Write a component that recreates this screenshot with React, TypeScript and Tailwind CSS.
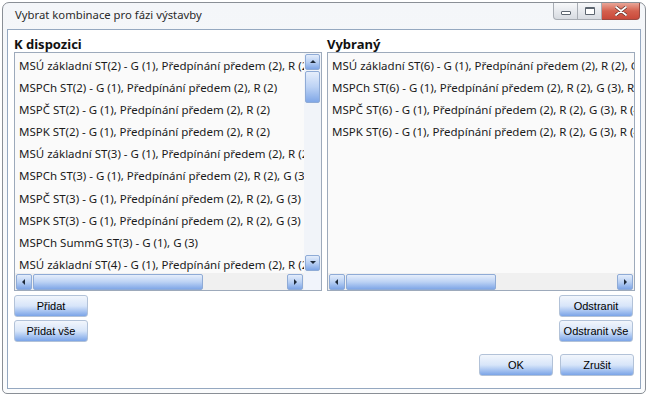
import React from 'react'

const available = [
  'MSÚ základní ST(2) - G (1), Předpínání předem (2), R (2), G (3)',
  'MSPCh ST(2) - G (1), Předpínání předem (2), R (2)',
  'MSPČ ST(2) - G (1), Předpínání předem (2), R (2)',
  'MSPK ST(2) - G (1), Předpínání předem (2), R (2)',
  'MSÚ základní ST(3) - G (1), Předpínání předem (2), R (2), G (3)',
  'MSPCh ST(3) - G (1), Předpínání předem (2), R (2), G (3)',
  'MSPČ ST(3) - G (1), Předpínání předem (2), R (2), G (3)',
  'MSPK ST(3) - G (1), Předpínání předem (2), R (2), G (3)',
  'MSPCh SummG ST(3) - G (1), G (3)',
  'MSÚ základní ST(4) - G (1), Předpínání předem (2), R (2), G (3)',
]

const selected = [
  'MSÚ základní ST(6) - G (1), Předpínání předem (2), R (2), G (3), R (4)',
  'MSPCh ST(6) - G (1), Předpínání předem (2), R (2), G (3), R (4)',
  'MSPČ ST(6) - G (1), Předpínání předem (2), R (2), G (3), R (4)',
  'MSPK ST(6) - G (1), Předpínání předem (2), R (2), G (3), R (4)',
]

type Dir = 'up' | 'down' | 'left' | 'right'

const Arrow = ({ dir }: { dir: Dir }) => {
  const pts = {
    up: '1,5 4,2 7,5',
    down: '1,2 4,5 7,2',
    left: '5,1 2,4 5,7',
    right: '3,1 6,4 3,7',
  }[dir]
  return (
    <svg width="8" height="8" viewBox="0 0 8 8">
      <polygon points={pts} fill="#1e2a3a" />
    </svg>
  )
}

const ScrollButton = ({ dir, className = '' }: { dir: Dir; className?: string }) => (
  <div
    className={`flex items-center justify-center rounded-[2px] border border-[#8fabd6] bg-linear-to-b from-[#e4edfb] via-[#b9d0f3] to-[#7ea5e6] ${className}`}
  >
    <Arrow dir={dir} />
  </div>
)

const Thumb = ({ className = '' }: { className?: string }) => (
  <div
    className={`rounded-[2px] border border-[#8fabd6] bg-linear-to-b from-[#e6eefb] via-[#bcd2f4] to-[#80a7e7] ${className}`}
  />
)

const ListBox = ({ items, vertical }: { items: string[]; vertical: boolean }) => (
  <div className="flex h-[239px] w-[308px] flex-col border border-[#9daabb] bg-[#fafafa]">
    <div className="flex min-h-0 flex-1">
      <div className="min-w-0 flex-1 overflow-hidden pt-[2px]">
        {items.map((item, i) => (
          <div key={i} className="h-[22.1px] whitespace-nowrap pl-[4px] text-[11.5px] leading-[22px] text-[#1b1b1b]">
            {item}
          </div>
        ))}
      </div>
      {vertical && (
        <div className="flex w-[17px] flex-col bg-[#f1f4f9] px-[1px] pt-[1px] pb-[2px]">
          <ScrollButton dir="up" className="h-[16px] w-[15px]" />
          <Thumb className="mt-[1px] h-[32px] w-[15px]" />
          <div className="flex-1" />
          <ScrollButton dir="down" className="h-[16px] w-[15px]" />
        </div>
      )}
    </div>
    <div className="flex h-[17px]">
      <div className="flex flex-1 items-center gap-[1px] bg-[#f0f0f0] px-[1px]">
        <ScrollButton dir="left" className="h-[16px] w-[16px]" />
        <Thumb className={vertical ? 'h-[16px] w-[170px]' : 'h-[16px] w-[150px]'} />
        <div className="flex-1" />
        <ScrollButton dir="right" className="h-[16px] w-[16px]" />
      </div>
      {vertical && <div className="w-[17px] bg-[#f1f4fb]" />}
    </div>
  </div>
)

const DialogButton = ({ children }: { children: React.ReactNode }) => (
  <button className="h-[22px] w-[74px] rounded-[3px] border border-[#b2c2d8] bg-linear-to-b from-[#f2f6fc] via-[#d7e5f9] to-[#7ba4e7] font-['Liberation_Sans',Arial,sans-serif] text-[11px] text-black">
    {children}
  </button>
)

export default function App() {
  return (
    <div className="h-[397px] w-[647px] overflow-hidden bg-white font-['Noto_Sans',sans-serif] text-[12px]">
      <div className="relative ml-[2px] mt-[2px] flex h-[392px] w-[644px] flex-col rounded-t-[7px] rounded-b-[5px] border border-[#8a8f96] bg-linear-to-b from-[#f4f6f9] to-[#fbfcfd] px-[4px] pb-[4px]">
        {/* Title bar */}
        <div className="h-[26px] pl-[8px] pt-[2px] text-[11.3px] leading-[20px] text-[#2b2b2b]">
          Vybrat kombinace pro fázi výstavby
        </div>
        <div className="absolute right-[5px] top-0 flex">
          <div className="flex h-[17px] w-[25px] items-center justify-center rounded-bl-[4px] border border-t-0 border-[#a7acb3] bg-linear-to-b from-[#f7f8fa] to-[#d7dbe1]">
            <div className="mt-[3px] h-[4px] w-[10px] rounded-[1px] border border-[#5d6670] bg-white" />
          </div>
          <div className="flex h-[17px] w-[24px] items-center justify-center border border-l-0 border-t-0 border-[#a7acb3] bg-linear-to-b from-[#f7f8fa] to-[#d7dbe1]">
            <div className="h-[8px] w-[10px] rounded-[1px] border border-[#5d6670] border-t-2 bg-white" />
          </div>
          <div className="flex h-[17px] w-[38px] items-center justify-center rounded-br-[4px] border border-l-0 border-t-0 border-[#9b4a42] bg-linear-to-b from-[#e8a597] via-[#d4604e] to-[#c9493a]">
            <svg width="12" height="10" viewBox="0 0 12 10">
              <path d="M1 1 L11 9 M11 1 L1 9" stroke="#5a2a24" strokeWidth="3.2" strokeLinecap="round" />
              <path d="M1 1 L11 9 M11 1 L1 9" stroke="#ffffff" strokeWidth="1.8" strokeLinecap="round" />
            </svg>
          </div>
        </div>

        {/* Content */}
        <div className="flex flex-1 flex-col border border-[#95a8c0] bg-white pl-[6px] pr-[4px] pt-[7px]">
          <div className="flex gap-[5px]">
            <div className="flex flex-col">
              <div className="h-[15px] text-[13px] font-bold leading-[15px] text-[#111]">K dispozici</div>
              <ListBox items={available} vertical />
              <div className="mt-[4px] flex flex-col gap-[3px]">
                <DialogButton>Přidat</DialogButton>
                <DialogButton>Přidat vše</DialogButton>
              </div>
            </div>
            <div className="flex flex-col">
              <div className="h-[15px] text-[13px] font-bold leading-[15px] text-[#111]">Vybraný</div>
              <ListBox items={selected} vertical={false} />
              <div className="mr-[2px] mt-[4px] flex flex-col items-end gap-[3px]">
                <DialogButton>Odstranit</DialogButton>
                <DialogButton>Odstranit vše</DialogButton>
              </div>
            </div>
          </div>
          <div className="mr-[2px] mt-[12px] flex justify-end gap-[7px]">
            <DialogButton>OK</DialogButton>
            <DialogButton>Zrušit</DialogButton>
          </div>
        </div>
      </div>
    </div>
  )
}
